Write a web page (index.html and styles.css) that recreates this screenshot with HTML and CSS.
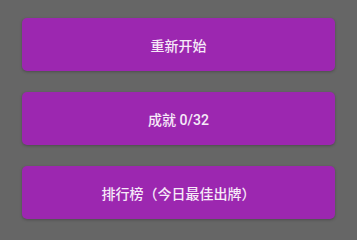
FILE: index.html
```html
<!DOCTYPE html>
<html lang="zh">
<head>
<meta charset="utf-8">
<link rel="stylesheet" href="styles.css">
</head>
<body>
<div class="menu">
  <button class="btn">重新开始</button>
  <button class="btn">成就 0/32</button>
  <button class="btn">排行榜（今日最佳出牌）</button>
</div>
</body>
</html>
```
FILE: styles.css
```css
html, body {
  margin: 0;
  padding: 0;
  background: #666666;
  width: 357px;
  height: 226px;
  overflow: hidden;
}
.menu {
  display: flex;
  flex-direction: column;
  gap: 21px;
  padding: 18px 22px 0 22px;
}
.btn {
  height: 53px;
  border: none;
  border-radius: 5px;
  background: #9c27b0;
  color: #f6eaf8;
  font-family: Roboto, "Noto Sans CJK SC", sans-serif;
  font-size: 14px;
  font-weight: 500;
  box-shadow: 0 1px 3px rgba(0,0,0,0.25);
  padding: 0;
}
```
